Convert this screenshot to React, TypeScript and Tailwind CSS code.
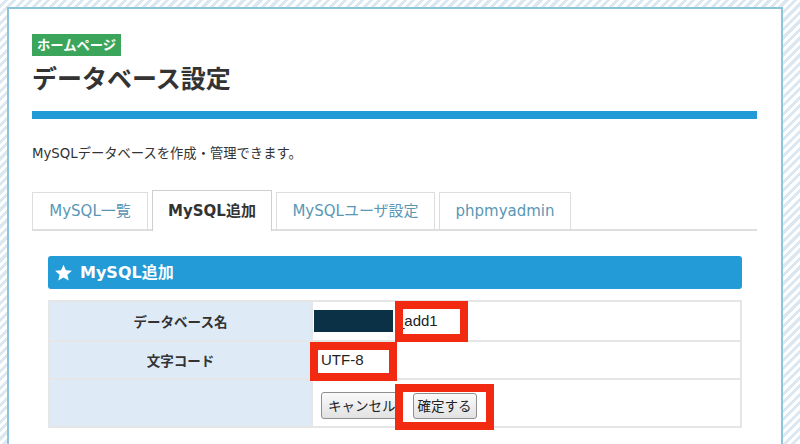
import React from "react";

function Star() {
  return (
    <svg width="17" height="17" viewBox="1 1 22 21" fill="#ffffff">
      <path d="M12 1.5l3.1 7.2 7.8.6-5.9 5.1 1.8 7.6L12 17.9 5.2 22l1.8-7.6L1.1 9.3l7.8-.6z" />
    </svg>
  );
}

export default function App() {
  const jp = "font-['Noto_Sans_CJK_JP',sans-serif]";
  return (
    <div className="h-[444px] w-[800px] overflow-hidden bg-[repeating-linear-gradient(135deg,#ffffff_0px,#ffffff_3px,#dce8f1_3px,#dce8f1_6px)] pt-[7px] pl-[7px]">
      <div className="w-[776px] h-[470px] bg-white border-2 border-[#8cc4da] pt-[24px] pl-[23px] pr-[24px] font-['DejaVu_Sans','Noto_Sans_CJK_JP',sans-serif] text-[#333]">
        <div className={`inline-flex h-[22px] items-center bg-[#3ba65b] px-[5px] text-[13.3px] font-bold text-white leading-none ${jp}`}>
          ホームページ
        </div>
        <h1 className={`mt-[5px] text-[25px] leading-[30px] font-bold text-[#333] ${jp}`}>
          データベース設定
        </h1>
        <div className="mt-[19px] h-[8px] bg-[#229ad5]" />
        <p className="mt-[25px] text-[13.3px] leading-[20px] text-[#333]">
          MySQLデータベースを作成・管理できます。
        </p>

        <div className="mt-[26px] flex items-end gap-[4px] border-b-2 border-[#dedede]">
          <div className="flex h-[37px] w-[116px] items-center justify-center border border-b-0 border-[#dddddd] bg-white text-[15px] text-[#5897b5]">
            MySQL一覧
          </div>
          <div className="relative z-10 -mb-[2px] flex h-[41px] w-[120px] items-center justify-center border border-b-0 border-[#cfcfcf] bg-white text-[15px] font-bold text-[#333]">
            MySQL追加
          </div>
          <div className="flex h-[37px] w-[159px] items-center justify-center border border-b-0 border-[#dddddd] bg-white text-[15px] text-[#5897b5]">
            MySQLユーザ設定
          </div>
          <div className="flex h-[37px] w-[132px] items-center justify-center border border-b-0 border-[#dddddd] bg-white text-[15px] text-[#5897b5]">
            phpmyadmin
          </div>
        </div>

        <div className="ml-[16px] mr-[15px] mt-[25px]">
          <div className="flex h-[33px] items-center rounded-[3px] bg-[#229bd6] pl-[7px] text-[16px] font-bold text-white">
            <Star />
            <span className="ml-[8px]">MySQL追加</span>
          </div>

          <div className="mt-[11px] border-2 border-[#e6e6e6]">
            <div className="flex h-[38px]">
              <div className={`flex w-[263px] items-center justify-center border-r-2 border-[#e6e6e6] bg-[#deebf7] text-[13.5px] font-bold text-[#333] ${jp}`}>
                データベース名
              </div>
              <div className="relative flex flex-1 items-center pl-[1px]">
                <div className="h-[22px] w-[79px] bg-[#0b3146]" />
                <span className="ml-[3px] font-['Liberation_Sans',sans-serif] text-[15px] text-[#222]">_add1</span>
                <div className="absolute left-[82px] top-[-1px] z-10 h-[41px] w-[73px] border-[8px] border-[#f22a12]" />
              </div>
            </div>
            <div className="flex h-[38px] border-t-2 border-[#e6e6e6]">
              <div className={`flex w-[263px] items-center justify-center border-r-2 border-[#e6e6e6] bg-[#deebf7] text-[13.5px] font-bold text-[#333] ${jp}`}>
                文字コード
              </div>
              <div className="relative flex flex-1 items-center pl-[8px]">
                <span className="font-['Liberation_Sans',sans-serif] text-[15px] text-[#222]">UTF-8</span>
                <div className="absolute left-[-3px] top-0 z-10 h-[39px] w-[87px] border-[8px] border-[#f22a12]" />
              </div>
            </div>
            <div className="flex h-[48px] border-t-2 border-[#e6e6e6]">
              <div className="w-[263px] border-r-2 border-[#e6e6e6] bg-[#deebf7]" />
              <div className="relative flex flex-1 items-start pl-[8px] pt-[12px]">
                <button className={`h-[27px] rounded-[3px] border border-[#8f8f8f] bg-[linear-gradient(#fafafa,#e2e2e2)] px-[6px] text-[13.5px] leading-none text-[#222] ${jp}`}>
                  キャンセル
                </button>
                <button className={`ml-[10px] mt-[1px] h-[26px] rounded-[3px] border border-[#8f8f8f] bg-[linear-gradient(#fafafa,#e2e2e2)] px-[4px] text-[13.5px] leading-none text-[#222] ${jp}`}>
                  確定する
                </button>
                <div className="absolute left-[82px] top-[4px] z-10 h-[46px] w-[99px] border-[8px] border-[#f22a12]" />
              </div>
            </div>
          </div>
        </div>
      </div>
    </div>
  );
}
